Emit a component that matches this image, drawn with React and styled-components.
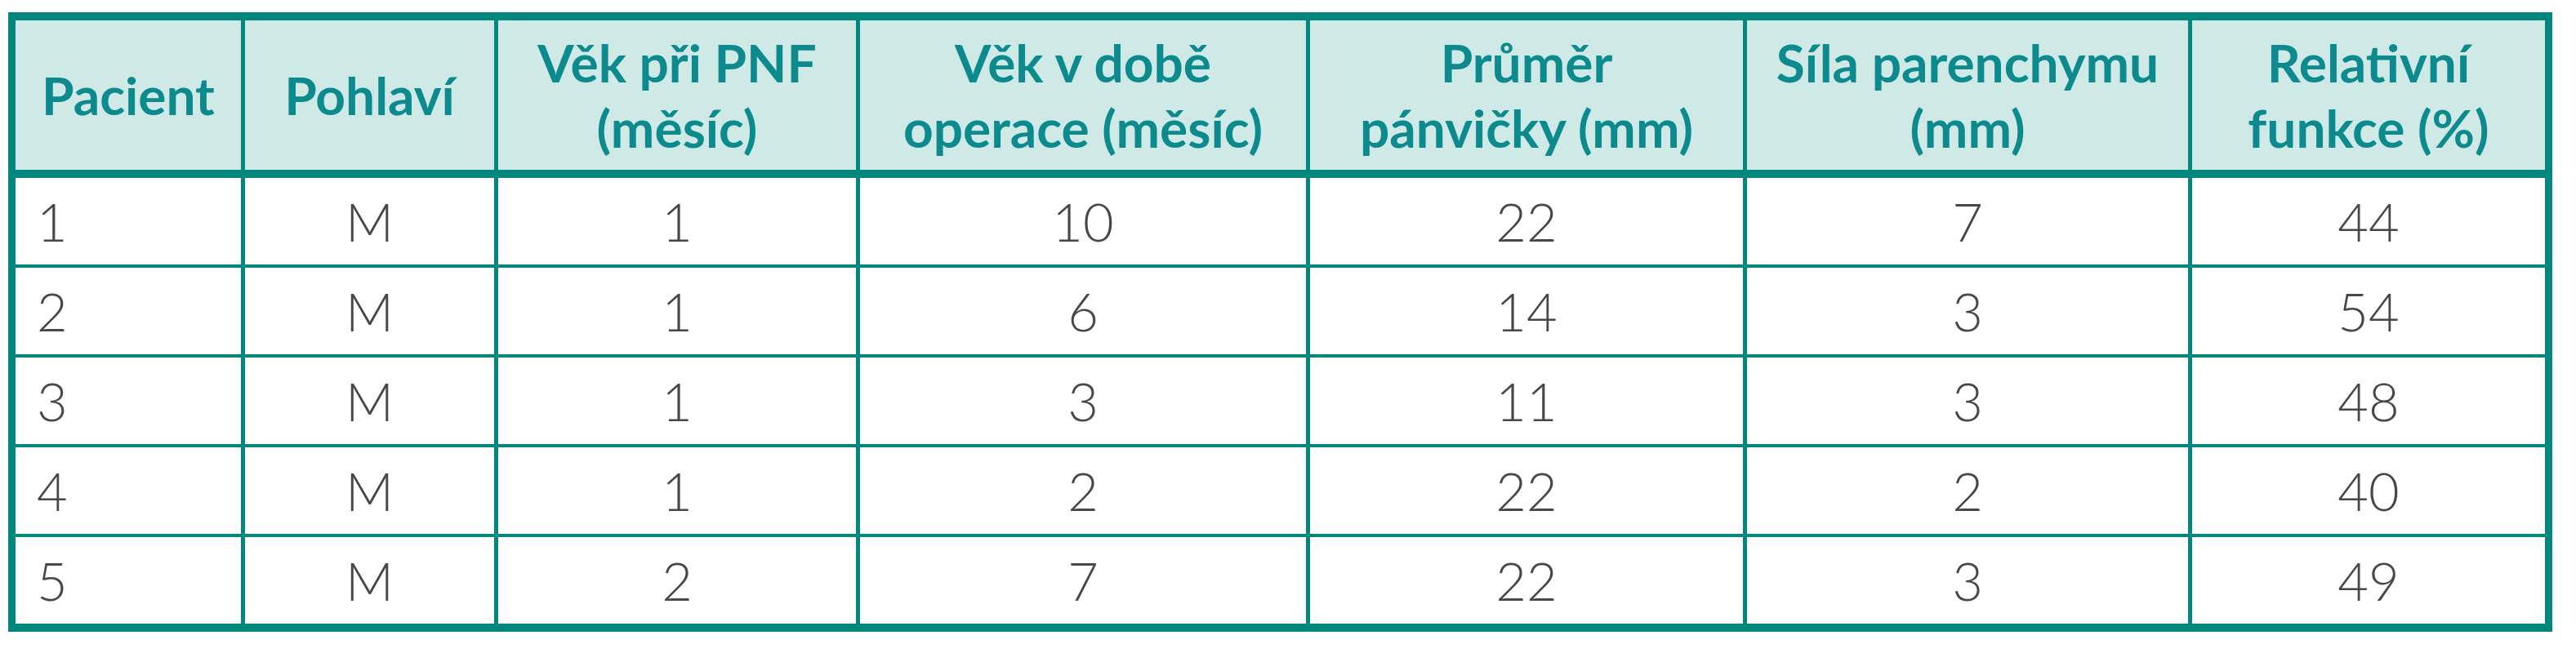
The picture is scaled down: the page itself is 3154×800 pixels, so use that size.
import React from 'react';
import styled, { createGlobalStyle } from 'styled-components';

const GlobalStyle = createGlobalStyle`
  html, body {
    margin: 0;
    padding: 0;
    background: #ffffff;
  }
  body {
    font-family: Lato, "Open Sans", "Liberation Sans", sans-serif;
  }
`;

const columns = [
  { key: 'patient', title: ['Pacient'], width: 276, align: 'left' },
  { key: 'sex', title: ['Pohlaví'], width: 305 },
  { key: 'agePnf', title: ['Věk při PNF', '(měsíc)'], width: 438 },
  { key: 'ageOp', title: ['Věk v době', 'operace (měsíc)'], width: 546 },
  { key: 'pelvis', title: ['Průměr', 'pánvičky (mm)'], width: 530 },
  { key: 'paren', title: ['Síla parenchymu', '(mm)'], width: 540 },
  { key: 'func', title: ['Relativní', 'funkce (%)'], width: 432 },
];

const rows = [
  ['1', 'M', '1', '10', '22', '7', '44'],
  ['2', 'M', '1', '6', '14', '3', '54'],
  ['3', 'M', '1', '3', '11', '3', '48'],
  ['4', 'M', '1', '2', '22', '2', '40'],
  ['5', 'M', '2', '7', '22', '3', '49'],
];

const Page = styled.div`
  height: 800px;
  padding: 15px 0 0 10px;
  box-sizing: border-box;
  overflow: hidden;
`;

const Table = styled.div`
  display: inline-grid;
  grid-template-columns: ${props => props.widths.map(w => `${w}px`).join(' ')};
  grid-template-rows: 188.5px;
  grid-auto-rows: 105.5px;
  column-gap: 5px;
  row-gap: 4.5px;
  padding: 10px 9px;
  background: #02877f;
`;

// header sits on a thicker rule: the margin lets the teal show through
const HeadCell = styled.div`
  grid-row: 1;
  margin-bottom: 5.5px;
  background: #cfeae6;
  display: flex;
  align-items: center;
  justify-content: center;
  text-align: center;
  font-size: 64px;
  line-height: 80px;
  font-weight: 700;
  color: #0c8a8d;
  white-space: nowrap;
`;

const Cell = styled.div`
  background: #ffffff;
  display: flex;
  align-items: center;
  justify-content: ${props => (props.align === 'left' ? 'flex-start' : 'center')};
  padding-left: ${props => (props.align === 'left' ? '26px' : '0')};
  font-size: 65px;
  font-weight: 300;
  color: #474747;
`;

export default function App() {
  return (
    <>
      <GlobalStyle />
      <Page>
        <Table widths={columns.map(c => c.width)}>
          {columns.map(col => (
            <HeadCell key={col.key}>
              <span>
                {col.title.map((line, i) => (
                  <React.Fragment key={i}>
                    {i > 0 && <br />}
                    {line}
                  </React.Fragment>
                ))}
              </span>
            </HeadCell>
          ))}
          {rows.map((row, r) =>
            row.map((value, c) => (
              <Cell key={`${r}-${c}`} align={columns[c].align}>
                {value}
              </Cell>
            ))
          )}
        </Table>
      </Page>
    </>
  );
}
